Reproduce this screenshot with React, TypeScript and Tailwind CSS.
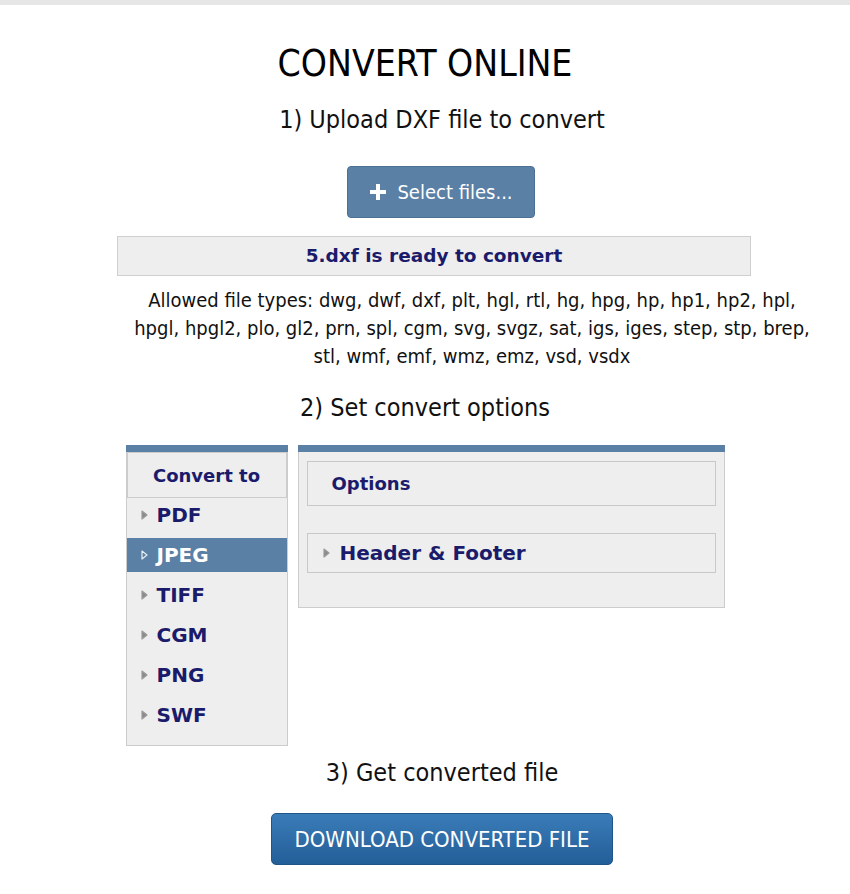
import React from "react";

const sans = "font-['Tahoma','DejaVu_Sans_Condensed','DejaVu_Sans',sans-serif]";
const bold = "font-['Verdana','DejaVu_Sans',sans-serif] font-bold";

const Arrow = ({ light }: { light?: boolean }) => (
  <svg width="7" height="10" viewBox="0 0 7 10" className="shrink-0">
    <path
      d="M1 1 L6 5 L1 9 Z"
      fill={light ? "none" : "#8a8a8a"}
      stroke={light ? "#e8eef5" : "#9a9a9a"}
      strokeWidth="1.2"
      strokeLinejoin="round"
    />
  </svg>
);

const formats = ["PDF", "JPEG", "TIFF", "CGM", "PNG", "SWF"];

export default function App() {
  return (
    <div className={`w-[850px] min-h-[894px] bg-white text-[#111] ${sans}`}>
      <div className="h-[5px] bg-[#e6e6e6]" />

      <div className="flex flex-col items-center">
        <h1 className="mt-[38px] text-[37px] leading-[42px] text-black">CONVERT ONLINE</h1>
        <p className="mt-[20px] ml-[34px] text-[25px] leading-[30px]">1) Upload DXF file to convert</p>

        <button className="mt-[31px] ml-[32px] w-[188px] h-[52px] flex items-center justify-center gap-[10px] rounded-[4px] bg-[#5a80a6] border border-[#4d7092] text-white text-[20px]">
          <svg width="18" height="18" viewBox="0 0 18 18">
            <path d="M7 1h4v6h6v4h-6v6H7v-6H1V7h6z" fill="white" />
          </svg>
          <span>Select files...</span>
        </button>

        <div className="mt-[18px] ml-[18px] w-[634px] h-[40px] flex items-center justify-center bg-[#eeeeee] border border-[#cfcfcf]">
          <span className={`${bold} text-[18.5px] text-[#1b1b6b]`}>5.dxf is ready to convert</span>
        </div>

        <p className="mt-[10px] ml-[94px] w-[720px] text-center text-[20px] leading-[28px]">
          Allowed file types: dwg, dwf, dxf, plt, hgl, rtl, hg, hpg, hp, hp1, hp2, hpl,
          <br />
          hpgl, hpgl2, plo, gl2, prn, spl, cgm, svg, svgz, sat, igs, iges, step, stp, brep,
          <br />
          stl, wmf, emf, wmz, emz, vsd, vsdx
        </p>

        <p className="mt-[23px] text-[25px] leading-[30px]">2) Set convert options</p>

        <div className="mt-[22px] flex items-start gap-[10px]">
          <div className="w-[162px] h-[301px] bg-[#eeeeee] border border-[#cccccc] border-t-0 flex flex-col">
            <div className="h-[7px] -mx-px bg-[#5b80a5]" />
            <div className="h-[46px] flex items-center justify-center border border-[#cccccc] bg-[#eeeeee]">
              <span className={`${bold} text-[18px] text-[#1b1b6b]`}>Convert to</span>
            </div>
            <div className="flex flex-col gap-[6px]">
              {formats.map((f) => {
                const active = f === "JPEG";
                return (
                  <div
                    key={f}
                    className={`h-[34px] flex items-center gap-[9px] pl-[14px] ${active ? "bg-[#5b80a5]" : ""}`}
                  >
                    <Arrow light={active} />
                    <span className={`${bold} text-[20px] ${active ? "text-white" : "text-[#1b1b6b]"}`}>{f}</span>
                  </div>
                );
              })}
            </div>
          </div>

          <div className="w-[427px] h-[163px] bg-[#eeeeee] border border-[#cccccc] border-t-0 flex flex-col">
            <div className="h-[7px] -mx-px bg-[#5b80a5]" />
            <div className="mx-[8px] mt-[9px] h-[45px] flex items-center pl-[24px] border border-[#c8c8c8]">
              <span className={`${bold} text-[18px] text-[#1b1b6b]`}>Options</span>
            </div>
            <div className="mx-[8px] mt-[27px] h-[40px] flex items-center gap-[10px] pl-[15px] border border-[#c8c8c8]">
              <Arrow />
              <span className={`${bold} text-[20px] text-[#1b1b6b]`}>Header &amp; Footer</span>
            </div>
          </div>
        </div>

        <p className="mt-[12px] ml-[34px] text-[25px] leading-[30px]">3) Get converted file</p>

        <button className="mt-[25px] ml-[34px] w-[342px] h-[52px] rounded-[5px] bg-gradient-to-b from-[#3a7cb8] to-[#235e98] border border-[#1f5488] text-white text-[22px]">
          DOWNLOAD CONVERTED FILE
        </button>
      </div>
    </div>
  );
}
